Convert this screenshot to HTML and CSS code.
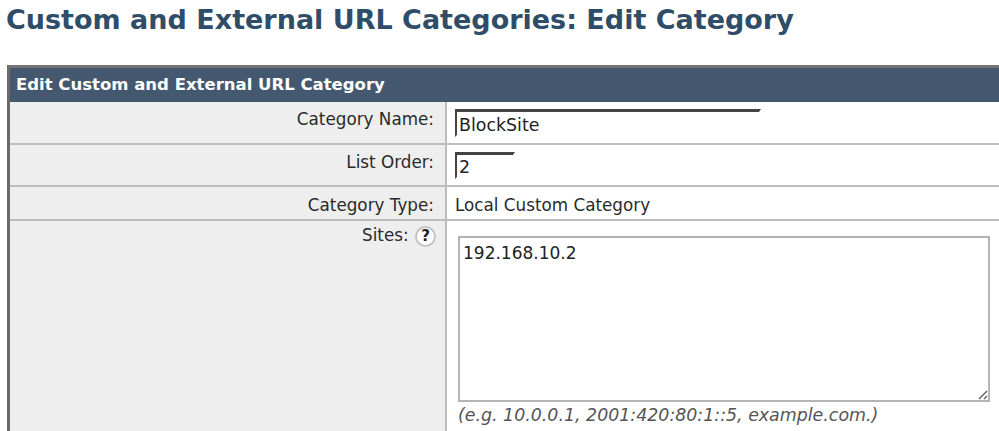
FILE: index.html
```html
<!DOCTYPE html>
<html lang="en">
<head>
<meta charset="utf-8">
<title>Edit Category</title>
<link rel="stylesheet" href="styles.css">
</head>
<body>
<h1 class="title">Custom and External URL Categories: Edit Category</h1>
<section class="panel">
  <h2 class="panel-head">Edit Custom and External URL Category</h2>
  <div class="row row-name">
    <div class="label">Category Name:</div>
    <div class="value"><input class="field field-name" type="text" value="BlockSite"></div>
  </div>
  <div class="row row-order">
    <div class="label">List Order:</div>
    <div class="value"><input class="field field-order" type="text" value="2"></div>
  </div>
  <div class="row row-type">
    <div class="label">Category Type:</div>
    <div class="value value-text">Local Custom Category</div>
  </div>
  <div class="row row-sites">
    <div class="label label-sites">Sites: <span class="help">?</span></div>
    <div class="value value-sites">
      <div class="sites-wrap">
        <textarea class="sites">192.168.10.2</textarea>
        <svg class="grip" width="10" height="10" viewBox="0 0 10 10" aria-hidden="true"><path d="M1 9 9 1M6 9 9 6" fill="none" stroke="#555" stroke-width="1.2"/></svg>
      </div>
      <div class="hint">(e.g. 10.0.0.1, 2001:420:80:1::5, example.com.)</div>
    </div>
  </div>
</section>
</body>
</html>
```
FILE: styles.css
```css
html, body {
  margin: 0;
  padding: 0;
  height: 431px;
  overflow: hidden;
  background: #fff;
}
body {
  font-family: "DejaVu Sans", Verdana, sans-serif;
  color: #222;
  font-size: 16.8px;
}
.title {
  margin: 0;
  padding: 4px 0 0 6px;
  height: 61px;
  box-sizing: border-box;
  font-size: 27px;
  line-height: 32px;
  font-weight: 700;
  color: #2f4d68;
  white-space: nowrap;
}
.panel {
  margin-left: 7px;
  width: 1020px;
  border-top: 3px solid #757575;
  border-left: 3px solid #6a6a6a;
  margin-top: 4px;
}
.panel-head {
  margin: 0;
  height: 34px;
  padding-left: 6px;
  box-sizing: border-box;
  background: #44586f;
  color: #fff;
  font-size: 16.5px;
  line-height: 33px;
  font-weight: 700;
  white-space: nowrap;
}
.row {
  display: grid;
  grid-template-columns: 437px 1fr;
  border-bottom: 2px solid #bdbdbd;
  box-sizing: border-box;
}
.row-name { height: 43px; }
.row-order { height: 42px; }
.row-type { height: 34px; }
.row-sites { height: 210px; border-bottom: 0; }
.label {
  background: #eeeeee;
  border-right: 2px solid #bdbdbd;
  text-align: right;
  padding: 6px 11px 0 0;
  line-height: 22px;
  color: #2a2a2a;
}
.row-type .label { padding-top: 7px; }
.label-sites { padding-top: 3px; padding-right: 9px; }
.value { background: #fff; padding-left: 8px; }
.value-text { padding-top: 7px; line-height: 22px; color: #2a2a2a; }
.field {
  display: block;
  box-sizing: border-box;
  font: 17.4px "DejaVu Sans", Verdana, sans-serif;
  color: #222;
  background: #fff;
  padding: 2px 0 0 2px;
  margin: 0;
  outline: 0;
  border-style: solid;
  border-width: 3px 2px 2px 2px;
  border-color: #444 #fff #fff #444;
}
.field-name { width: 306px; height: 28px; margin-top: 7px; }
.field-order { width: 60px; height: 27px; margin-top: 7px; }
.value-sites { padding-left: 11px; padding-top: 15px; }
.sites-wrap {
  position: relative;
  width: 532px;
  height: 166px;
}
.sites {
  display: block;
  box-sizing: border-box;
  width: 100%;
  height: 100%;
  border: 2px solid #b4b4b4;
  margin: 0;
  padding: 4px 3px;
  font: 17px/22px "DejaVu Sans", Verdana, sans-serif;
  color: #222;
  outline: 0;
  resize: none;
}
.grip {
  position: absolute;
  right: 2px;
  bottom: 2px;
}
.hint {
  font-size: 17.4px;
  font-style: italic;
  line-height: 22px;
  color: #555;
  margin-top: 2px;
}
.help {
  display: inline-block;
  width: 21px;
  height: 21px;
  margin-left: 1px;
  box-sizing: border-box;
  border: 2px solid #c4c4c4;
  border-radius: 50%;
  background: #fff;
  text-align: center;
  font-size: 15px;
  font-weight: 700;
  line-height: 17px;
  color: #222;
  vertical-align: 0;
}
```
